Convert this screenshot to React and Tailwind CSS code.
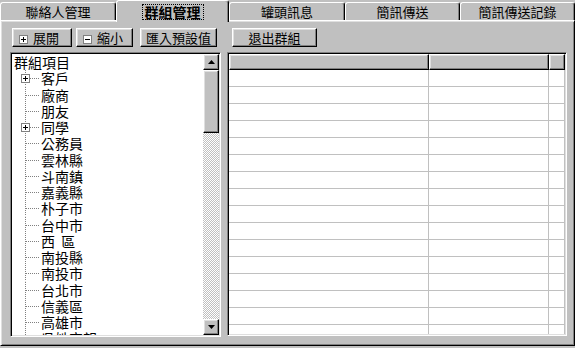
import React from "react";

const raised =
  "border border-t-white border-l-white border-r-black border-b-black shadow-[inset_-1px_-1px_0_#808080,inset_1px_1px_0_#dfdfdf]";
const sunken =
  "border border-t-[#808080] border-l-[#808080] border-r-white border-b-white shadow-[inset_1px_1px_0_#000,inset_-1px_-1px_0_#dfdfdf]";

const tabs = [
  { label: "聯絡人管理", w: "w-[116px]" },
  { label: "群組管理", w: "w-[113px]", active: true },
  { label: "罐頭訊息", w: "w-[116px]" },
  { label: "簡訊傳送", w: "w-[115px]" },
  { label: "簡訊傳送記錄", w: "w-[115px]" },
];

const groups = [
  { name: "客戶", more: true },
  { name: "廠商" },
  { name: "朋友" },
  { name: "同學", more: true },
  { name: "公務員" },
  { name: "雲林縣" },
  { name: "斗南鎮" },
  { name: "嘉義縣" },
  { name: "朴子市" },
  { name: "台中市" },
  { name: "西  區" },
  { name: "南投縣" },
  { name: "南投市" },
  { name: "台北市" },
  { name: "信義區" },
  { name: "高雄市" },
  { name: "吳姓宗親" },
];

function BoxIcon({ plus }) {
  return (
    <svg width="9" height="9" className="shrink-0">
      <rect x="0.5" y="0.5" width="8" height="8" fill="#fff" stroke="#808080" />
      <line x1="2" y1="4.5" x2="7" y2="4.5" stroke="#000" />
      {plus && <line x1="4.5" y1="2" x2="4.5" y2="7" stroke="#000" />}
    </svg>
  );
}

function Btn({ children, className = "", icon }) {
  return (
    <div className={`h-[19px] flex items-center text-[13px] leading-[13px] ${raised} ${className}`}>
      {icon !== undefined && (
        <span className="mr-[5px] mt-[3px] flex">
          <BoxIcon plus={icon === "+"} />
        </span>
      )}
      <span>{children}</span>
    </div>
  );
}

function TreeRow({ name, more }) {
  return (
    <div className="h-[16.25px] flex items-center whitespace-pre">
      <svg width="29" height="16.25" className="shrink-0">
        <line x1="13.5" y1="0" x2="13.5" y2="16.25" stroke="#808080" strokeDasharray="1 1" />
        <line x1="14" y1="8.5" x2="28" y2="8.5" stroke="#808080" strokeDasharray="1 1" />
        {more && (
          <g>
            <rect x="9.5" y="4.5" width="8" height="8" fill="#fff" stroke="#808080" />
            <line x1="11" y1="8.5" x2="16" y2="8.5" stroke="#000" />
            <line x1="13.5" y1="6" x2="13.5" y2="11" stroke="#000" />
          </g>
        )}
      </svg>
      <span className="leading-[16px]">{name}</span>
    </div>
  );
}

function Arrow({ up }) {
  return (
    <div className={`h-[16px] w-[16px] bg-[#c0c0c0] flex items-center justify-center ${raised}`}>
      <svg width="7" height="4">
        <polygon points={up ? "3.5,0 7,4 0,4" : "0,0 7,0 3.5,4"} fill="#000" />
      </svg>
    </div>
  );
}

export default function App() {
  return (
    <div className="w-[575px] h-[348px] bg-[#c0c0c0] text-black font-['Noto_Sans_CJK_TC','Noto_Sans_CJK_JP',sans-serif] overflow-hidden">
      {/* tab strip */}
      <div className="h-[20px] flex items-end">
        {tabs.map((t) =>
          t.active ? (
            <div
              key={t.label}
              className={`${t.w} h-[22px] -mb-[2px] relative z-10 bg-[#c0c0c0] rounded-t-[3px] border-t border-l border-r border-t-white border-l-white border-r-black shadow-[inset_-1px_0_0_#808080] flex items-start justify-center pt-[3px]`}
            >
              <span className="border border-dotted border-black px-[2px] text-[14px] leading-[14px] font-bold">
                {t.label}
              </span>
            </div>
          ) : (
            <div
              key={t.label}
              className={`${t.w} h-[18px] rounded-t-[3px] border-t border-l border-r border-t-white border-l-white border-r-black shadow-[inset_-1px_0_0_#808080] flex items-center justify-center text-[13px] leading-[13px]`}
            >
              {t.label}
            </div>
          )
        )}
      </div>

      {/* panel */}
      <div className="h-[326px] border border-t-white border-l-white border-r-black border-b-black shadow-[inset_1px_1px_0_#dfdfdf,inset_-1px_-1px_0_#808080] pt-[7px] pl-[9px]">
        {/* buttons */}
        <div className="flex">
          <div className="w-[211px] flex pl-[2px]">
            <Btn icon="+" className="w-[60px] pl-[6px]">展開</Btn>
            <Btn icon="-" className="w-[57px] pl-[6px] ml-[4px]">縮小</Btn>
            <Btn className="w-[77px] justify-center ml-[7px]">匯入預設值</Btn>
          </div>
          <div className="ml-[6px] pl-[5px]">
            <Btn className="w-[85px] justify-center">退出群組</Btn>
          </div>
        </div>

        <div className="flex mt-[5px]">
          {/* group tree */}
          <div className={`w-[211px] h-[285px] flex ${sunken} p-[1px]`}>
            <div className="flex-1 bg-white overflow-hidden text-[14px]">
              <div className="h-[16.25px] flex items-center pl-[2px] leading-[16px]">群組項目</div>
              {groups.map((g) => (
                <TreeRow key={g.name} name={g.name} more={g.more} />
              ))}
            </div>
            <div className="w-[16px] flex flex-col">
              <Arrow up />
              <div className={`h-[63px] bg-[#c0c0c0] ${raised}`} />
              <div className="flex-1 bg-[repeating-conic-gradient(#c0c0c0_0_25%,#fff_0_50%)] bg-[length:2px_2px]" />
              <Arrow />
            </div>
          </div>

          {/* member table */}
          <div className={`w-[340px] h-[284px] ml-[6px] ${sunken} p-[1px]`}>
            <div className="h-full bg-white overflow-hidden flex flex-col">
              <div className="h-[16px] flex shrink-0">
                <div className={`w-[200px] bg-[#c0c0c0] ${raised}`} />
                <div className={`w-[120px] bg-[#c0c0c0] ${raised}`} />
                <div className={`flex-1 bg-[#c0c0c0] ${raised}`} />
              </div>
              {Array.from({ length: 16 }).map((_, i) => (
                <div key={i} className="h-[17px] shrink-0 flex border-b border-[#c0c0c0]">
                  <div className="w-[200px] border-r border-[#c0c0c0]" />
                  <div className="w-[120px] border-r border-[#c0c0c0]" />
                  <div className="flex-1 border-r border-[#c0c0c0]" />
                </div>
              ))}
            </div>
          </div>
        </div>
      </div>
    </div>
  );
}
